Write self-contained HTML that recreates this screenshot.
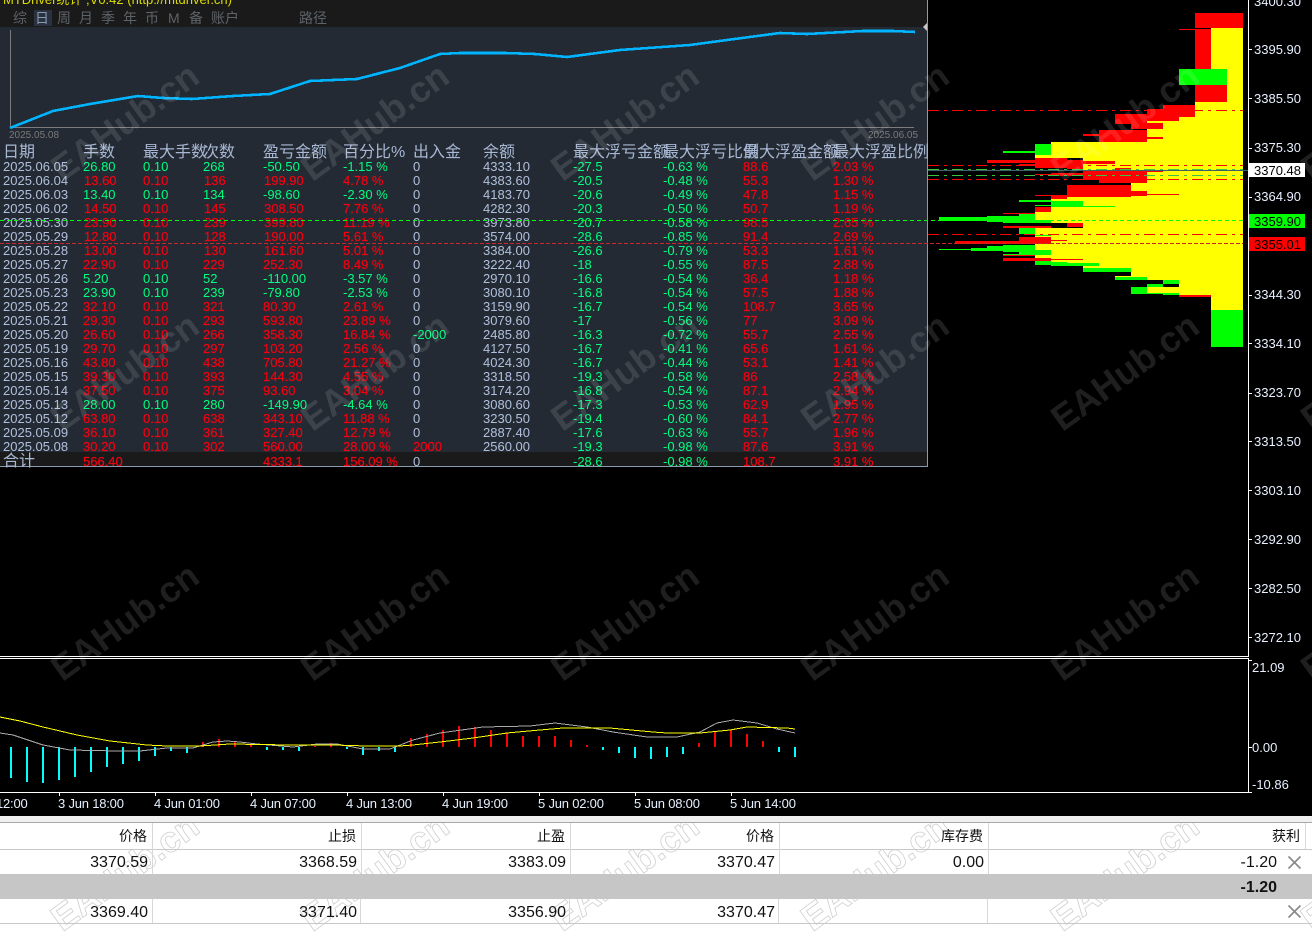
<!DOCTYPE html>
<html><head><meta charset="utf-8"><style>
html,body{margin:0;padding:0;background:#000;width:1312px;height:950px;overflow:hidden}
svg{display:block;position:absolute;left:0;top:0}
text{font-family:"Liberation Sans","WenQuanYi Zen Hei",sans-serif;font-size:13px;white-space:pre}
.c{fill:#b0c0dc}.g{fill:#00ff7f}.r{fill:#f50010;stroke:#f50010;stroke-width:.2}
.h{fill:#a8b8d4;font-size:16px;font-family:"WenQuanYi Zen Hei","Liberation Sans",sans-serif}
.t{fill:#5e6368;font-size:14px;font-family:"WenQuanYi Zen Hei","Liberation Sans",sans-serif}
.p{fill:#e8f0ff}
.tm{fill:#e8f0ff;letter-spacing:-.2px}
.b{fill:#111;font-size:16px;text-anchor:end}
.hd{fill:#111;font-size:14px;text-anchor:end;font-family:"Liberation Sans","Noto Sans CJK SC",sans-serif}
.w{font-size:36px;font-weight:bold;text-anchor:middle}
.wd{fill:rgba(255,255,255,.12)}
.wl{fill:none;stroke:#cfcfcf;stroke-width:.8}
</style></head><body>
<svg width="1312" height="950" viewBox="0 0 1312 950" xmlns="http://www.w3.org/2000/svg">
<rect width="1312" height="950" fill="#000"/>
<!-- volume profile -->
<path fill="#ff0" d="M1243 28H1211V102H1195V117H1179V121H1147V142H1051V155H1035V158H1083V170H1147V183H1131V197H1067V199H1051V212H1035V223H1083V228H1035V237H1051V244H1035V258H1051V266H1083V272H1131V276H1115V280H1163V284H1179V287H1147V293H1179V297H1211V310H1243Z"/>
<g fill="#f00">
<rect x="1195" y="13" width="48" height="15"/><rect x="1179" y="29" width="32" height="1"/><rect x="1195" y="30" width="16" height="39"/>
<rect x="1195" y="85" width="32" height="17"/><rect x="1163" y="105" width="32" height="12"/><rect x="1147" y="109" width="32" height="12"/>
<rect x="1115" y="114" width="32" height="10"/><rect x="1131" y="123" width="32" height="6"/><rect x="1099" y="130" width="48" height="12"/>
<rect x="1083" y="134" width="16" height="2"/><rect x="1147" y="137" width="16" height="2"/><rect x="1035" y="158" width="32" height="10"/>
<rect x="987" y="160" width="48" height="3"/><rect x="1019" y="164" width="16" height="2"/><rect x="1067" y="160" width="16" height="9"/>
<rect x="1083" y="161" width="32" height="3"/><rect x="1115" y="168" width="16" height="2"/><rect x="1083" y="170" width="64" height="10"/>
<rect x="1099" y="180" width="48" height="3"/><rect x="1131" y="170" width="32" height="2"/><rect x="1051" y="173" width="32" height="3"/>
<rect x="1035" y="174" width="16" height="1"/><rect x="1067" y="185" width="64" height="12"/><rect x="1131" y="191" width="16" height="5"/>
<rect x="1051" y="195" width="16" height="4"/><rect x="1035" y="195" width="16" height="1"/><rect x="1147" y="194" width="32" height="1"/>
<rect x="1035" y="207" width="16" height="5"/><rect x="1003" y="213" width="32" height="1"/><rect x="1067" y="223" width="16" height="4"/>
<rect x="1003" y="226" width="48" height="2"/><rect x="1019" y="237" width="32" height="7"/><rect x="955" y="241" width="64" height="3"/>
<rect x="1051" y="240" width="16" height="1"/><rect x="1003" y="255" width="32" height="1"/><rect x="1003" y="258" width="48" height="3"/><rect x="1051" y="259" width="32" height="1"/>
<rect x="1179" y="295" width="32" height="2"/>
</g>
<g fill="#0f0">
<rect x="1179" y="69" width="48" height="16"/><rect x="1035" y="144" width="16" height="11"/><rect x="1003" y="151" width="32" height="2"/>
<rect x="1051" y="201" width="32" height="6"/><rect x="1019" y="200" width="32" height="2"/><rect x="1083" y="206" width="32" height="1"/>
<rect x="1035" y="205" width="16" height="1"/><rect x="1019" y="214" width="16" height="5"/><rect x="939" y="217" width="96" height="4"/>
<rect x="987" y="216" width="32" height="6"/><rect x="1003" y="220" width="48" height="3"/><rect x="1019" y="228" width="16" height="6"/>
<rect x="1035" y="235" width="16" height="1"/><rect x="939" y="249" width="32" height="1"/><rect x="971" y="248" width="16" height="3"/>
<rect x="987" y="246" width="16" height="5"/><rect x="1003" y="245" width="32" height="7"/><rect x="1019" y="252" width="16" height="3"/>
<rect x="1035" y="250" width="16" height="5"/><rect x="1003" y="254" width="16" height="1"/><rect x="1035" y="261" width="16" height="4"/>
<rect x="1051" y="262" width="16" height="1"/><rect x="1051" y="263" width="48" height="3"/><rect x="1083" y="268" width="48" height="4"/>
<rect x="1115" y="277" width="32" height="3"/><rect x="1163" y="280" width="16" height="4"/><rect x="1147" y="284" width="16" height="3"/>
<rect x="1131" y="287" width="16" height="7"/><rect x="1147" y="293" width="16" height="1"/><rect x="1163" y="293" width="16" height="2"/>
<rect x="1211" y="310" width="32" height="37"/>
</g>
<!-- horizontal lines on chart -->
<g fill="none" stroke-width="1">
<path stroke="#f00" stroke-dasharray="11 5 3 5" d="M928 110.5H1243M928 165.5H1243M928 179.5H1243M928 234.5H1243"/>
<path stroke="#3fc23f" stroke-dasharray="11 5 3 5" d="M928 169.5H1243M928 175.5H1243"/>
<path stroke="#3a6068" d="M928 170.5H1248"/>
</g>
<!-- price axis -->
<path stroke="#fff" stroke-width="1" fill="none" d="M0 656.5H1248.5V0M0 658.5H1248.5V792.5H0M1248 49.5h4M1248 98.5h4M1248 148.5h4M1248 197.5h4M1248 295.5h4M1248 343.5h4M1248 393.5h4M1248 441.5h4M1248 490.5h4M1248 539.5h4M1248 588.5h4M1248 637.5h4M1248 660.5h4M1248 747.5h4M1248 792.5h4M59.5 792v4M155.5 792v4M251.5 792v4M347.5 792v4M443.5 792v4M539.5 792v4M635.5 792v4M731.5 792v4"/>
<rect x="1249" y="163" width="56" height="14" fill="#fff"/><rect x="1249" y="214" width="56" height="14" fill="#0f0"/><rect x="1249" y="237" width="56" height="14" fill="#f00"/>
<g class="p">
<text x="1254" y="6" class="p">3400.30</text><text x="1254" y="54" class="p">3395.90</text><text x="1254" y="103" class="p">3385.50</text><text x="1254" y="152" class="p">3375.30</text>
<text x="1254" y="201" class="p">3364.90</text><text x="1254" y="299" class="p">3344.30</text><text x="1254" y="348" class="p">3334.10</text><text x="1254" y="397" class="p">3323.70</text>
<text x="1254" y="446" class="p">3313.50</text><text x="1254" y="495" class="p">3303.10</text><text x="1254" y="544" class="p">3292.90</text><text x="1254" y="593" class="p">3282.50</text>
<text x="1254" y="642" class="p">3272.10</text><text x="1252" y="672" class="p">21.09</text><text x="1252" y="752" class="p">0.00</text><text x="1252" y="789" class="p">-10.86</text>
</g>
<text x="1254" y="175" fill="#000">3370.48</text><text x="1254" y="226" fill="#000">3359.90</text><text x="1254" y="249" fill="#000">3355.01</text>
<!-- MACD -->
<path fill="none" stroke="#0ff" stroke-width="2" shape-rendering="crispEdges" d="M11 747V778M27 747V782M43 747V783M59 747V780M75 747V777M91 747V772M107 747V767M123 747V764M139 747V761M155 747V756M171 747V751M187 747V753M267 747V750M283 747V750M299 747V751M347 747V749M363 747V755M379 747V751M395 747V752M603 747V750M619 747V753M635 747V758M651 747V759M667 747V757M683 747V754M779 747V752M795 747V757"/>
<path fill="none" stroke="#f00" stroke-width="2" shape-rendering="crispEdges" d="M203 747V742M219 747V739M235 747V741M251 747V745M315 747V746M331 747V743M411 747V738M427 747V734M443 747V730M459 747V726M475 747V727M491 747V730M507 747V733M523 747V736M539 747V736M555 747V736M571 747V740M587 747V745M699 747V743M715 747V731M731 747V730M747 747V734M763 747V741"/>
<polyline fill="none" stroke="#aaa" stroke-width="1" shape-rendering="crispEdges" points="0,733 13,735 43,745 70,750 117,751 140,751 167,748 193,748 213,742 227,741 240,742 257,744 293,747 317,744 337,744 363,749 390,749 413,740 440,733 483,727 530,726 555,723 587,727 613,732 647,737 677,737 700,732 717,723 733,720 757,723 777,729 795,733"/>
<polyline fill="none" stroke="#ff0" stroke-width="1" shape-rendering="crispEdges" points="0,717 20,721 43,727 77,735 110,741 147,745 167,746 200,746 230,744 290,745 333,745 367,746 400,746 413,745 440,742 473,738 507,733 540,730 563,728 610,728 653,732 667,733 700,733 730,730 747,727 787,728 795,729"/>
<!-- panel -->
<rect width="927" height="466" fill="#232a33"/>
<rect width="927" height="27" fill="#1a1a1a"/>
<rect x="0" y="452" width="927" height="14" fill="#1a1a1a"/>
<rect x="927" y="0" width="1" height="467" fill="#8a9ab0"/>
<rect x="0" y="466" width="928" height="1" fill="#8a9ab0"/>
<path fill="#c8c8c8" d="M923 27l4-4v8z"/>
<text x="3" y="4" fill="#dcdc00">MTDriver统计 ,V0.42 (http://mtdriver.cn)</text>
<rect x="34" y="10" width="18" height="16" fill="#283240"/>
<text x="13" y="23" class="t">综</text><text x="35" y="23" class="t" style="fill:#8a9ab0">日</text><text x="57" y="23" class="t">周</text><text x="79" y="23" class="t">月</text><text x="101" y="23" class="t">季</text><text x="123" y="23" class="t">年</text><text x="145" y="23" class="t">币</text><text x="168" y="23" class="t" style="font-family:'Liberation Sans'">M</text><text x="189" y="23" class="t">备</text><text x="211" y="23" class="t">账户</text><text x="299" y="23" class="t">路径</text>
<!-- equity chart -->
<path fill="none" stroke="#7c7c7c" stroke-width="1" d="M10.5 30V127.5H914"/>
<polyline fill="none" stroke="#00b4ff" stroke-width="2.6" shape-rendering="crispEdges" points="10,128 53,111 90,104 138,96 163,98 192,99 233,96 270,94 310,81 357,79 400,68 440,54 460,53 505,53 535,54 567,57 620,50 690,45 727,40 780,33 807,34 863,31 893,31 915,32"/>
<text x="9" y="138" style="font-size:10px" fill="#7a7a7a">2025.05.08</text><text x="868" y="138" style="font-size:10px" fill="#7a7a7a">2025.06.05</text>
<!-- table header -->
<text x="3" y="157" class="h">日期</text><text x="83" y="157" class="h">手数</text><text x="143" y="157" class="h">最大手数</text><text x="203" y="157" class="h">次数</text><text x="263" y="157" class="h">盈亏金额</text><text x="343" y="157" class="h">百分比%</text><text x="413" y="157" class="h">出入金</text><text x="483" y="157" class="h">余额</text><text x="573" y="157" class="h">最大浮亏金额</text><text x="663" y="157" class="h">最大浮亏比例</text><text x="743" y="157" class="h">最大浮盈金额</text><text x="833" y="157" class="h">最大浮盈比例</text>
<!-- rows -->
<g transform="translate(0,171)"><text x="3" class="c">2025.06.05</text><text x="83" class="g">26.80</text><text x="143" class="g">0.10</text><text x="203" class="g">268</text><text x="263" class="g">-50.50</text><text x="343" class="g">-1.15 %</text><text x="413" class="c">0</text><text x="483" class="c">4333.10</text><text x="573" class="g">-27.5</text><text x="663" class="g">-0.63 %</text><text x="743" class="r">88.6</text><text x="833" class="r">2.03 %</text></g>
<g transform="translate(0,185)"><text x="3" class="c">2025.06.04</text><text x="84" class="r">13.60</text><text x="143" class="r">0.10</text><text x="204" class="r">136</text><text x="264" class="r">199.90</text><text x="343" class="r">4.78 %</text><text x="413" class="c">0</text><text x="483" class="c">4383.60</text><text x="573" class="g">-20.5</text><text x="663" class="g">-0.48 %</text><text x="743" class="r">55.3</text><text x="833" class="r">1.30 %</text></g>
<g transform="translate(0,199)"><text x="3" class="c">2025.06.03</text><text x="83" class="g">13.40</text><text x="143" class="g">0.10</text><text x="203" class="g">134</text><text x="263" class="g">-98.60</text><text x="343" class="g">-2.30 %</text><text x="413" class="c">0</text><text x="483" class="c">4183.70</text><text x="573" class="g">-20.6</text><text x="663" class="g">-0.49 %</text><text x="743" class="r">47.8</text><text x="833" class="r">1.15 %</text></g>
<g transform="translate(0,213)"><text x="3" class="c">2025.06.02</text><text x="84" class="r">14.50</text><text x="143" class="r">0.10</text><text x="204" class="r">145</text><text x="264" class="r">308.50</text><text x="343" class="r">7.76 %</text><text x="413" class="c">0</text><text x="483" class="c">4282.30</text><text x="573" class="g">-20.3</text><text x="663" class="g">-0.50 %</text><text x="743" class="r">50.7</text><text x="833" class="r">1.19 %</text></g>
<g transform="translate(0,227)"><text x="3" class="c">2025.05.30</text><text x="84" class="r">23.90</text><text x="143" class="r">0.10</text><text x="204" class="r">239</text><text x="264" class="r">399.80</text><text x="343" class="r">11.19 %</text><text x="413" class="c">0</text><text x="483" class="c">3973.80</text><text x="573" class="g">-20.7</text><text x="663" class="g">-0.58 %</text><text x="743" class="r">98.5</text><text x="833" class="r">2.65 %</text></g>
<g transform="translate(0,241)"><text x="3" class="c">2025.05.29</text><text x="84" class="r">12.80</text><text x="143" class="r">0.10</text><text x="204" class="r">128</text><text x="264" class="r">190.00</text><text x="343" class="r">5.61 %</text><text x="413" class="c">0</text><text x="483" class="c">3574.00</text><text x="573" class="g">-28.6</text><text x="663" class="g">-0.85 %</text><text x="743" class="r">91.4</text><text x="833" class="r">2.69 %</text></g>
<g transform="translate(0,255)"><text x="3" class="c">2025.05.28</text><text x="84" class="r">13.00</text><text x="143" class="r">0.10</text><text x="204" class="r">130</text><text x="264" class="r">161.60</text><text x="343" class="r">5.01 %</text><text x="413" class="c">0</text><text x="483" class="c">3384.00</text><text x="573" class="g">-26.6</text><text x="663" class="g">-0.79 %</text><text x="743" class="r">53.3</text><text x="833" class="r">1.61 %</text></g>
<g transform="translate(0,269)"><text x="3" class="c">2025.05.27</text><text x="83" class="r">22.90</text><text x="143" class="r">0.10</text><text x="203" class="r">229</text><text x="263" class="r">252.30</text><text x="343" class="r">8.49 %</text><text x="413" class="c">0</text><text x="483" class="c">3222.40</text><text x="573" class="g">-18</text><text x="663" class="g">-0.55 %</text><text x="743" class="r">87.5</text><text x="833" class="r">2.88 %</text></g>
<g transform="translate(0,283)"><text x="3" class="c">2025.05.26</text><text x="83" class="g">5.20</text><text x="143" class="g">0.10</text><text x="203" class="g">52</text><text x="263" class="g">-110.00</text><text x="343" class="g">-3.57 %</text><text x="413" class="c">0</text><text x="483" class="c">2970.10</text><text x="573" class="g">-16.6</text><text x="663" class="g">-0.54 %</text><text x="743" class="r">36.4</text><text x="833" class="r">1.18 %</text></g>
<g transform="translate(0,297)"><text x="3" class="c">2025.05.23</text><text x="83" class="g">23.90</text><text x="143" class="g">0.10</text><text x="203" class="g">239</text><text x="263" class="g">-79.80</text><text x="343" class="g">-2.53 %</text><text x="413" class="c">0</text><text x="483" class="c">3080.10</text><text x="573" class="g">-16.8</text><text x="663" class="g">-0.54 %</text><text x="743" class="r">57.5</text><text x="833" class="r">1.88 %</text></g>
<g transform="translate(0,311)"><text x="3" class="c">2025.05.22</text><text x="83" class="r">32.10</text><text x="143" class="r">0.10</text><text x="203" class="r">321</text><text x="263" class="r">80.30</text><text x="343" class="r">2.61 %</text><text x="413" class="c">0</text><text x="483" class="c">3159.90</text><text x="573" class="g">-16.7</text><text x="663" class="g">-0.54 %</text><text x="743" class="r">108.7</text><text x="833" class="r">3.65 %</text></g>
<g transform="translate(0,325)"><text x="3" class="c">2025.05.21</text><text x="83" class="r">29.30</text><text x="143" class="r">0.10</text><text x="203" class="r">293</text><text x="263" class="r">593.80</text><text x="343" class="r">23.89 %</text><text x="413" class="c">0</text><text x="483" class="c">3079.60</text><text x="573" class="g">-17</text><text x="663" class="g">-0.56 %</text><text x="743" class="r">77</text><text x="833" class="r">3.09 %</text></g>
<g transform="translate(0,339)"><text x="3" class="c">2025.05.20</text><text x="83" class="r">26.60</text><text x="143" class="r">0.10</text><text x="203" class="r">266</text><text x="263" class="r">358.30</text><text x="343" class="r">16.84 %</text><text x="413" class="g">-2000</text><text x="483" class="c">2485.80</text><text x="573" class="g">-16.3</text><text x="663" class="g">-0.72 %</text><text x="743" class="r">55.7</text><text x="833" class="r">2.55 %</text></g>
<g transform="translate(0,353)"><text x="3" class="c">2025.05.19</text><text x="83" class="r">29.70</text><text x="143" class="r">0.10</text><text x="203" class="r">297</text><text x="263" class="r">103.20</text><text x="343" class="r">2.56 %</text><text x="413" class="c">0</text><text x="483" class="c">4127.50</text><text x="573" class="g">-16.7</text><text x="663" class="g">-0.41 %</text><text x="743" class="r">65.6</text><text x="833" class="r">1.61 %</text></g>
<g transform="translate(0,367)"><text x="3" class="c">2025.05.16</text><text x="83" class="r">43.80</text><text x="143" class="r">0.10</text><text x="203" class="r">438</text><text x="263" class="r">705.80</text><text x="343" class="r">21.27 %</text><text x="413" class="c">0</text><text x="483" class="c">4024.30</text><text x="573" class="g">-16.7</text><text x="663" class="g">-0.44 %</text><text x="743" class="r">53.1</text><text x="833" class="r">1.41 %</text></g>
<g transform="translate(0,381)"><text x="3" class="c">2025.05.15</text><text x="83" class="r">39.30</text><text x="143" class="r">0.10</text><text x="203" class="r">393</text><text x="263" class="r">144.30</text><text x="343" class="r">4.55 %</text><text x="413" class="c">0</text><text x="483" class="c">3318.50</text><text x="573" class="g">-19.3</text><text x="663" class="g">-0.58 %</text><text x="743" class="r">86</text><text x="833" class="r">2.58 %</text></g>
<g transform="translate(0,395)"><text x="3" class="c">2025.05.14</text><text x="83" class="r">37.50</text><text x="143" class="r">0.10</text><text x="203" class="r">375</text><text x="263" class="r">93.60</text><text x="343" class="r">3.04 %</text><text x="413" class="c">0</text><text x="483" class="c">3174.20</text><text x="573" class="g">-16.8</text><text x="663" class="g">-0.54 %</text><text x="743" class="r">87.1</text><text x="833" class="r">2.94 %</text></g>
<g transform="translate(0,409)"><text x="3" class="c">2025.05.13</text><text x="83" class="g">28.00</text><text x="143" class="g">0.10</text><text x="203" class="g">280</text><text x="263" class="g">-149.90</text><text x="343" class="g">-4.64 %</text><text x="413" class="c">0</text><text x="483" class="c">3080.60</text><text x="573" class="g">-17.3</text><text x="663" class="g">-0.53 %</text><text x="743" class="r">62.9</text><text x="833" class="r">1.95 %</text></g>
<g transform="translate(0,423)"><text x="3" class="c">2025.05.12</text><text x="83" class="r">63.80</text><text x="143" class="r">0.10</text><text x="203" class="r">638</text><text x="263" class="r">343.10</text><text x="343" class="r">11.88 %</text><text x="413" class="c">0</text><text x="483" class="c">3230.50</text><text x="573" class="g">-19.4</text><text x="663" class="g">-0.60 %</text><text x="743" class="r">84.1</text><text x="833" class="r">2.77 %</text></g>
<g transform="translate(0,437)"><text x="3" class="c">2025.05.09</text><text x="83" class="r">36.10</text><text x="143" class="r">0.10</text><text x="203" class="r">361</text><text x="263" class="r">327.40</text><text x="343" class="r">12.79 %</text><text x="413" class="c">0</text><text x="483" class="c">2887.40</text><text x="573" class="g">-17.6</text><text x="663" class="g">-0.63 %</text><text x="743" class="r">55.7</text><text x="833" class="r">1.96 %</text></g>
<g transform="translate(0,451)"><text x="3" class="c">2025.05.08</text><text x="83" class="r">30.20</text><text x="143" class="r">0.10</text><text x="203" class="r">302</text><text x="263" class="r">560.00</text><text x="343" class="r">28.00 %</text><text x="413" class="r">2000</text><text x="483" class="c">2560.00</text><text x="573" class="g">-19.3</text><text x="663" class="g">-0.98 %</text><text x="743" class="r">87.6</text><text x="833" class="r">3.91 %</text></g>
<g transform="translate(0,466)"><text x="3" class="h">合计</text><text x="83" class="r">566.40</text><text x="263" class="r">4333.1</text><text x="343" class="r">156.09 %</text><text x="413" class="c">0</text><text x="573" class="g">-28.6</text><text x="663" class="g">-0.98 %</text><text x="743" class="r">108.7</text><text x="833" class="r">3.91 %</text></g>
<!-- lines over panel -->
<path fill="none" stroke="#0f0" stroke-width="1" stroke-dasharray="4 3" d="M0 220.5H1243"/>
<path fill="none" stroke="#c8282c" stroke-width="1" stroke-dasharray="4 2" d="M0 243.5H1243"/>
<!-- dark watermarks -->
<text class="w wd" transform="translate(125,122) rotate(-36)" dy="12">EAHub.cn</text><text class="w wd" transform="translate(375,122) rotate(-36)" dy="12">EAHub.cn</text><text class="w wd" transform="translate(625,122) rotate(-36)" dy="12">EAHub.cn</text><text class="w wd" transform="translate(875,122) rotate(-36)" dy="12">EAHub.cn</text><text class="w wd" transform="translate(1125,122) rotate(-36)" dy="12">EAHub.cn</text><text class="w wd" transform="translate(1375,122) rotate(-36)" dy="12">EAHub.cn</text>
<text class="w wd" transform="translate(125,372) rotate(-36)" dy="12">EAHub.cn</text><text class="w wd" transform="translate(375,372) rotate(-36)" dy="12">EAHub.cn</text><text class="w wd" transform="translate(625,372) rotate(-36)" dy="12">EAHub.cn</text><text class="w wd" transform="translate(875,372) rotate(-36)" dy="12">EAHub.cn</text><text class="w wd" transform="translate(1125,372) rotate(-36)" dy="12">EAHub.cn</text><text class="w wd" transform="translate(1375,372) rotate(-36)" dy="12">EAHub.cn</text>
<text class="w wd" transform="translate(125,622) rotate(-36)" dy="12">EAHub.cn</text><text class="w wd" transform="translate(375,622) rotate(-36)" dy="12">EAHub.cn</text><text class="w wd" transform="translate(625,622) rotate(-36)" dy="12">EAHub.cn</text><text class="w wd" transform="translate(875,622) rotate(-36)" dy="12">EAHub.cn</text><text class="w wd" transform="translate(1125,622) rotate(-36)" dy="12">EAHub.cn</text><text class="w wd" transform="translate(1375,622) rotate(-36)" dy="12">EAHub.cn</text>
<!-- bottom table -->
<rect x="0" y="816" width="1312" height="134" fill="#fff"/>
<text class="w wl" transform="translate(125,872) rotate(-36)" dy="12">EAHub.cn</text><text class="w wl" transform="translate(375,872) rotate(-36)" dy="12">EAHub.cn</text><text class="w wl" transform="translate(625,872) rotate(-36)" dy="12">EAHub.cn</text><text class="w wl" transform="translate(875,872) rotate(-36)" dy="12">EAHub.cn</text><text class="w wl" transform="translate(1125,872) rotate(-36)" dy="12">EAHub.cn</text><text class="w wl" transform="translate(1375,872) rotate(-36)" dy="12">EAHub.cn</text>
<rect x="0" y="796" width="1312" height="20" fill="#000"/>
<rect x="0" y="816" width="1312" height="6" fill="#f0f0f0"/>
<rect x="0" y="822" width="1312" height="1" fill="#a8a8a8"/>
<rect x="0" y="849" width="1312" height="1" fill="#c8c8c8"/>
<rect x="0" y="874" width="1312" height="25" fill="#c6c6c6"/>
<rect x="0" y="923" width="1312" height="1" fill="#c8c8c8"/>
<text x="-4" y="808" class="tm">12:00</text><text x="58" y="808" class="tm">3 Jun 18:00</text><text x="154" y="808" class="tm">4 Jun 01:00</text><text x="250" y="808" class="tm">4 Jun 07:00</text><text x="346" y="808" class="tm">4 Jun 13:00</text><text x="442" y="808" class="tm">4 Jun 19:00</text><text x="538" y="808" class="tm">5 Jun 02:00</text><text x="634" y="808" class="tm">5 Jun 08:00</text><text x="730" y="808" class="tm">5 Jun 14:00</text>
<path stroke="#d8d8d8" fill="none" d="M152.5 823V874M361.5 823V874M570.5 823V874M779.5 823V874M988.5 823V874M1305.5 823V849M152.5 899V923M360.5 899V923M569.5 899V923M778.5 899V923M987.5 899V923"/>
<text x="147" y="841" class="hd">价格</text><text x="356" y="841" class="hd">止损</text><text x="565" y="841" class="hd">止盈</text><text x="774" y="841" class="hd">价格</text><text x="983" y="841" class="hd">库存费</text><text x="1300" y="841" class="hd">获利</text>
<text x="148" y="867" class="b">3370.59</text><text x="357" y="867" class="b">3368.59</text><text x="566" y="867" class="b">3383.09</text><text x="775" y="867" class="b">3370.47</text><text x="984" y="867" class="b">0.00</text><text x="1277" y="867" class="b">-1.20</text>
<text x="1277" y="892" class="b" style="font-weight:bold">-1.20</text>
<text x="148" y="917" class="b">3369.40</text><text x="357" y="917" class="b">3371.40</text><text x="566" y="917" class="b">3356.90</text><text x="775" y="917" class="b">3370.47</text>
<path stroke="#888" stroke-width="1.6" fill="none" d="M1288.5 856.5L1300.5 868.5M1300.5 856.5L1288.5 868.5M1288.5 905.5L1300.5 917.5M1300.5 905.5L1288.5 917.5"/>
</svg>
</body></html>
